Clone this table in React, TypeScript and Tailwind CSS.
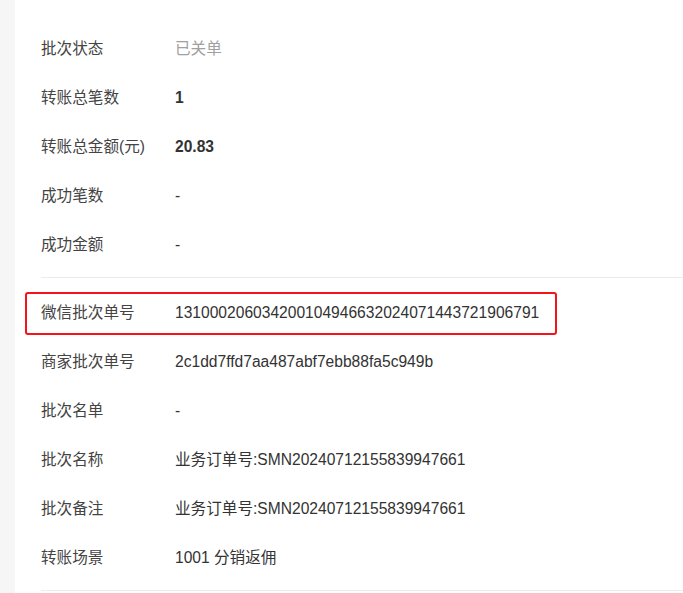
import React from 'react';

type Row = { label: string; value: string; tone?: 'muted' | 'bold'; marked?: boolean };

const summary: Row[] = [
  { label: '批次状态', value: '已关单', tone: 'muted' },
  { label: '转账总笔数', value: '1', tone: 'bold' },
  { label: '转账总金额(元)', value: '20.83', tone: 'bold' },
  { label: '成功笔数', value: '-' },
  { label: '成功金额', value: '-' },
];

const details: Row[] = [
  { label: '微信批次单号', value: '131000206034200104946632024071443721906791', marked: true },
  { label: '商家批次单号', value: '2c1dd7ffd7aa487abf7ebb88fa5c949b' },
  { label: '批次名单', value: '-' },
  { label: '批次名称', value: '业务订单号:SMN20240712155839947661' },
  { label: '批次备注', value: '业务订单号:SMN20240712155839947661' },
  { label: '转账场景', value: '1001 分销返佣' },
];

function InfoRow({ row }: { row: Row }) {
  const valueClass =
    row.tone === 'muted'
      ? 'text-[#a0a0a0]'
      : row.tone === 'bold'
        ? 'font-bold text-[#333]'
        : 'text-[#333]';
  return (
    <div className="relative flex h-[49px] items-center text-[15.6px]">
      {row.marked && (
        <div className="absolute left-[-16px] top-[4px] h-[43px] w-[532px] rounded-[3px] border-2 border-[#f5141a]" />
      )}
      <div className="w-[134px] shrink-0 text-[#444]">{row.label}</div>
      <div className={valueClass}>{row.value}</div>
    </div>
  );
}

export default function App() {
  return (
    <div
      className="flex h-[593px] w-full overflow-hidden bg-white"
      style={{ fontFamily: '"Liberation Sans", "Noto Sans CJK SC", sans-serif' }}
    >
      <div className="w-[15px] shrink-0 bg-[#f6f6f6]" />
      <div className="flex-1 pl-[26px]">
        <div className="pt-[24px] pb-[8px]">
          {summary.map((r) => (
            <InfoRow key={r.label} row={r} />
          ))}
        </div>
        <div className="border-t border-[#ececec] pt-[10px] pb-[8px]">
          {details.map((r) => (
            <InfoRow key={r.label} row={r} />
          ))}
        </div>
        <div className="border-t border-[#ececec]" />
      </div>
    </div>
  );
}
